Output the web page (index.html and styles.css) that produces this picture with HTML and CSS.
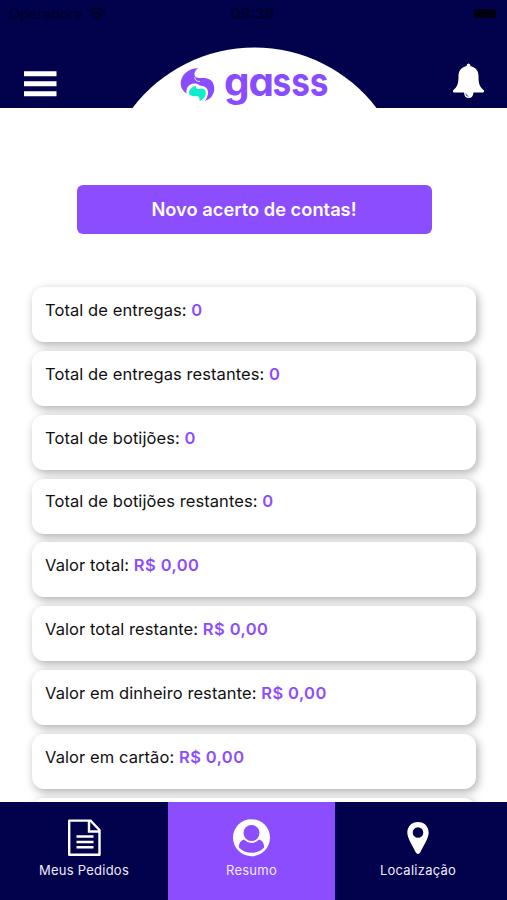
FILE: index.html
```html
<!DOCTYPE html>
<html lang="pt-BR">
<head>
<meta charset="utf-8">
<title>gasss</title>
<link rel="stylesheet" href="styles.css">
</head>
<body>
<div class="app">
  <header class="header">
    <div class="status">
      <div class="carrier"><span>Operadora</span>
        <svg width="18" height="14" viewBox="0 0 18 14"><path d="M1 5Q9-2 17 5M4 8.2Q9 4 14 8.2" fill="none" stroke="currentColor" stroke-width="2.5"/><path d="M6 10Q9 7.5 12 10L9 13z" fill="currentColor"/></svg>
      </div>
      <span class="clock">09:39</span>
      <span class="battery"></span>
    </div>
    <div class="toolbar">
      <svg class="menu" width="33" height="26" viewBox="0 0 33 26"><path d="M0 2.7h32.5M0 12.8h32.5M0 22.8h32.5" stroke="#fff" stroke-width="5"/></svg>
      <svg class="brand" width="246" height="61" viewBox="0 0 246 61">
        <path d="M-.5 61A153.3 153.3 0 0 1 243.500 61z" fill="#fff"/>
        <path d="M65.500 21C54 21.500 47.500 29 47.700 37Q48 43 53.700 46.500Q52.500 40 57.500 37.500C60 36 64.500 36 66.500 38.500C75 39 78 45 72 54Q80 51.500 81.300 43C81.500 33 76 31 69.500 31C65 31.500 61 30.500 61.500 26.500Q62 23 65.500 21z" fill="#8a4cff"/>
        <path d="M61.700 30Q62 34.500 67 34.500" fill="none" stroke="#fff" stroke-width=".8"/>
        <path d="M63 39C57 40 54 45.500 57.500 48.300Q60 49.500 64 49Q67 49.500 66.500 54C72 52.500 74.500 46 71.500 42.500Q69 41 66 42Q62.500 42.500 63 39z" fill="#0fedca"/>
        <text class="wordmark" y="48.500"><tspan x="91" textLength="25.500" lengthAdjust="spacingAndGlyphs">g</tspan><tspan x="115.500" textLength="25.500" lengthAdjust="spacingAndGlyphs">a</tspan><tspan x="139.500" textLength="56" lengthAdjust="spacingAndGlyphs">sss</tspan></text>
      </svg>
      <svg class="bell" width="33" height="36" viewBox="0 0 33 36"><path d="M14.500 3Q14.500 .5 16.500 .5T18.500 3C24 4.500 26.500 8 26.500 13C26.500 21 27.500 23.500 32 27.500Q32.500 29.500 31 29.500H21.500Q21 35 16.700 35T12 29.500H2Q.5 29.500 1 27.500C5.500 23.500 6.500 21 6.500 13C6.500 8 9 4.500 14.500 3z" fill="#fff"/><path d="M13.800 30.500Q14 33 16.500 33.300" fill="none" stroke="#02014b" stroke-width=".7"/></svg>
    </div>
  </header>
  <main class="content">
    <button class="action">Novo acerto de contas!</button>
    <div class="cards">
      <div class="card">Total de entregas: <b>0</b></div>
      <div class="card">Total de entregas restantes: <b>0</b></div>
      <div class="card">Total de botijões: <b>0</b></div>
      <div class="card">Total de botijões restantes: <b>0</b></div>
      <div class="card">Valor total: <b>R$ 0,00</b></div>
      <div class="card">Valor total restante: <b>R$ 0,00</b></div>
      <div class="card">Valor em dinheiro restante: <b>R$ 0,00</b></div>
      <div class="card">Valor em cartão: <b>R$ 0,00</b></div>
      <div class="card"></div>
    </div>
  </main>
  <nav class="tabs">
    <div class="tab">
      <svg width="38" height="38" viewBox="0 0 38 38" fill="none" stroke="#fff" stroke-width="2.4"><path d="M4.200 1.600H25.500L34.500 11V35.800H4.200z" stroke-linejoin="round"/><path d="M24 2V12.500H34"/><path d="M11.500 17.500h17M11.500 23h17M11.500 28.300h17" stroke-width="2.500"/></svg>
      <span>Meus Pedidos</span>
    </div>
    <div class="tab active">
      <svg width="38" height="38" viewBox="0 0 38 38"><circle cx="18.500" cy="18.700" r="18.500" fill="#fff"/><path d="M6 28.500C5.500 24.500 8 21 11.500 20.500Q18.500 27 25.500 20.500C29 21 31.500 24.500 31 28.500C25 35.500 12 35.500 6 28.500z" fill="#8c4dff"/><circle cx="18.500" cy="14" r="8.900" fill="#8c4dff" stroke="#fff" stroke-width="1.800"/></svg>
      <span>Resumo</span>
    </div>
    <div class="tab">
      <svg width="38" height="38" viewBox="0 0 38 38"><path fill-rule="evenodd" d="M19 3C12.500 3 8.300 7.700 8.300 13.500C8.300 19.200 13.500 26.700 16.500 33Q19 37 21.500 33C24.500 26.700 29.700 19.200 29.700 13.500C29.700 7.700 25.500 3 19 3zM19 8.200A5.300 5.300 0 1 1 19 18.800A5.300 5.300 0 1 1 19 8.200z" fill="#fff"/></svg>
      <span>Localização</span>
    </div>
  </nav>
</div>
</body>
</html>
```
FILE: styles.css
```css
* { box-sizing: border-box; }
body { margin: 0; font-family: Inter, "Liberation Sans", sans-serif; }
.app { width: 507px; height: 900px; display: flex; flex-direction: column; overflow: hidden; background: #fff; }
.header { height: 108px; flex: none; background: #02014b; display: flex; flex-direction: column; justify-content: space-between; }
.status { height: 27px; display: grid; grid-template-columns: 1fr 60px 1fr; align-items: center; padding: 0 11px 0 9px; color: #010027; font-size: 14.500px; }
.carrier { display: flex; gap: 6px; align-items: center; }
.clock { font-weight: 600; text-align: center; font-size: 15px; }
.battery { justify-self: end; width: 22px; height: 9px; border-radius: 2px; background: #000010; }
.toolbar { height: 61px; display: flex; align-items: flex-end; }
.menu { margin: 0 76px 11px 24px; flex: none; }
.brand { flex: none; overflow: visible; }
.wordmark { font-family: Inter, sans-serif; font-size: 40px; font-weight: 700; fill: #8a4cff; font-feature-settings: "cv11"; }
.bell { margin: 0 0 9px 73px; flex: none; }
.content { flex: 1; min-height: 0; overflow: hidden; padding: 77px 31px 0 32px; display: flex; flex-direction: column; }
.action { flex: none; align-self: center; width: 355px; height: 49px; border: 0; border-radius: 6px; background: #8c4dff; color: #fff; font: 600 18.300px Inter, sans-serif; padding: 0 0 2px; }
.cards { margin-top: 53.300px; display: flex; flex-direction: column; gap: 8.800px; }
.card { flex: none; height: 55px; border-radius: 12px; background: #fff; box-shadow: 2px 3px 10px rgba(0, 0, 0, .32); padding: 12.700px 13px; font-size: 16.500px; line-height: 21px; letter-spacing: .08px; color: #111; white-space: nowrap; }
.card b { font-weight: 600; letter-spacing: .4px; color: #8c4dff; }
.tabs { flex: none; height: 98px; display: grid; grid-template-columns: 168px 167px 1fr; background: #02014b; }
.tab { display: flex; flex-direction: column; align-items: center; padding-top: 17px; color: #eeeaff; font-size: 13px; line-height: 16px; letter-spacing: .25px; }
.tab:last-child { padding-right: 6px; }
.tab span { margin-top: 5px; }
.active { background: #8c4dff; }
```
